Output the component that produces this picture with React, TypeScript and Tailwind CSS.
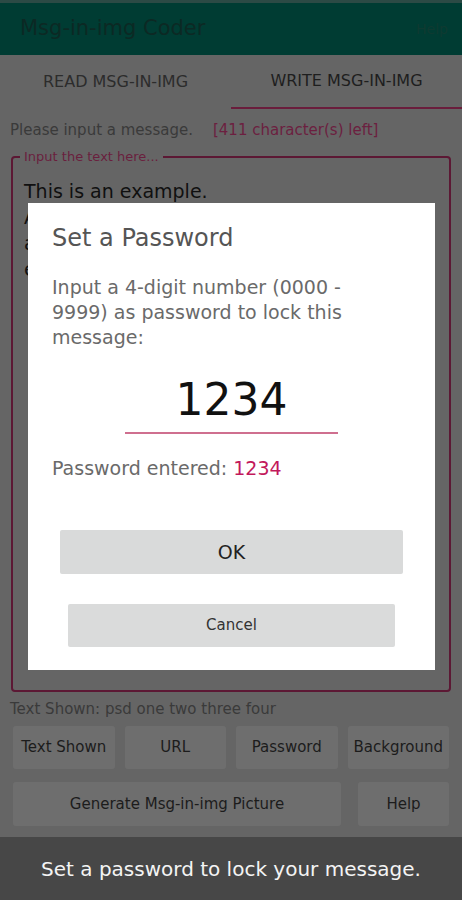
import type { ReactNode } from 'react';

const FONT = { fontFamily: '"DejaVu Sans", "Noto Sans", sans-serif' };

function DimButton({ children, className = '' }: { children: ReactNode; className?: string }) {
  return (
    <div
      className={`flex h-[43px] items-center justify-center rounded-[3px] bg-[#6e6e6e] text-[15px] text-[#1c1c1c] ${className}`}
    >
      {children}
    </div>
  );
}

export default function App() {
  return (
    <div className="relative h-[900px] w-[462px] overflow-hidden bg-[#656565]" style={FONT}>
      <div className="h-[3px] bg-[#2c4a45]" />
      <header className="flex h-[52px] items-center justify-between bg-[#003c33] pl-5 pr-[14px]">
        <span className="text-[21px] text-[#0c2924]">Msg-in-img Coder</span>
        <span className="text-[14px] text-[#0e3a31]">Help</span>
      </header>

      <nav className="flex h-[54px] text-[16px]">
        <div className="flex flex-1 items-center justify-center text-[#2c2c2c]">READ MSG-IN-IMG</div>
        <div className="flex flex-1 items-center justify-center border-b-2 border-[#6a1d3c] text-[#1e1e1e]">
          WRITE MSG-IN-IMG
        </div>
      </nav>

      <div className="flex items-center px-[10px] pt-[12px] text-[15px] leading-[18px]">
        <span className="text-[#3a3a3a]">Please input a message.</span>
        <span className="ml-[20px] text-[#6c1f40]">[411 character(s) left]</span>
      </div>

      <div className="relative mx-[11px] mt-[17px] h-[536px] rounded-[4px] border-2 border-[#5c1834] px-[11px] pt-[20px]">
        <span className="absolute -top-[9px] left-[7px] bg-[#656565] px-[4px] text-[13px] leading-[16px] text-[#6a1f3e]">
          Input the text here...
        </span>
        <div className="text-[19px] leading-[26px] text-[#101010]">
          <p>This is an example.</p>
          <p>A</p>
          <p>a</p>
          <p>e</p>
        </div>
      </div>

      <p className="px-[10px] pt-[8px] text-[15px] leading-[18px] text-[#3a3a3a]">Text Shown: psd one two three four</p>

      <div className="grid grid-cols-4 gap-[10px] px-[13px] pt-[8px]">
        <DimButton>Text Shown</DimButton>
        <DimButton>URL</DimButton>
        <DimButton>Password</DimButton>
        <DimButton>Background</DimButton>
      </div>
      <div className="flex gap-[17px] px-[13px] pt-[13px]">
        <DimButton className="h-[44px] flex-1">Generate Msg-in-img Picture</DimButton>
        <DimButton className="h-[44px] w-[91px]">Help</DimButton>
      </div>

      {/* password dialog */}
      <div className="absolute left-[28px] top-[203px] h-[467px] w-[407px] bg-white px-[24px] pt-[20px]">
        <h2 className="text-[24px] leading-[30px] text-[#555555]">Set a Password</h2>
        <p className="mt-[22px] pr-[50px] text-[19px] leading-[25px] text-[#6a6a6a]">
          Input a 4-digit number (0000 - 9999) as password to lock this message:
        </p>
        <div className="mx-auto mt-[22px] w-[213px] border-b-2 border-[#cf6f8f] pb-[4px] text-center text-[44px] leading-[56px] text-[#111111]">
          1234
        </div>
        <p className="mt-[22px] text-[19px] leading-[25px] text-[#6a6a6a]">
          Password entered: <span className="text-[#c2185b]">1234</span>
        </p>
        <div className="mx-[8px] mt-[49px] flex h-[44px] items-center justify-center rounded-[2px] bg-[#d9dada] text-[19px] text-[#222222]">
          OK
        </div>
        <div className="mx-[16px] mt-[30px] flex h-[43px] items-center justify-center rounded-[2px] bg-[#dadbdb] text-[15px] text-[#333333]">
          Cancel
        </div>
      </div>

      {/* toast */}
      <div className="absolute bottom-0 left-0 flex h-[63px] w-full items-center justify-center bg-[#474747] text-[20px] text-[#f4f4f4]">
        Set a password to lock your message.
      </div>
    </div>
  );
}
